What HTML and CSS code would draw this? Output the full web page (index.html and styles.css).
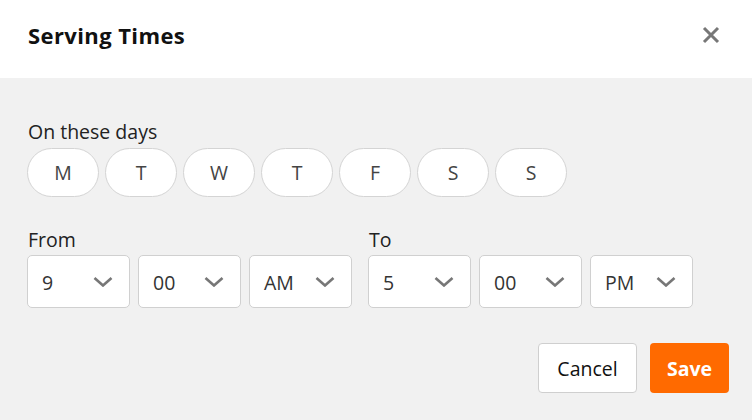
FILE: index.html
```html
<!DOCTYPE html>
<html>
<head>
<meta charset="utf-8">
<link rel="stylesheet" href="styles.css">
</head>
<body>
<div class="dialog">
  <header class="head">
    <h1 class="title">Serving Times</h1>
    <button class="close" aria-label="Close">
      <svg width="18" height="18" viewBox="0 0 18 18"><path d="M2 2 L16 16 M16 2 L2 16" stroke="#777" stroke-width="3" stroke-linecap="butt"/></svg>
    </button>
  </header>
  <main class="body">
    <div class="label">On these days</div>
    <div class="days">
      <span class="day">M</span>
      <span class="day">T</span>
      <span class="day">W</span>
      <span class="day">T</span>
      <span class="day">F</span>
      <span class="day">S</span>
      <span class="day">S</span>
    </div>
    <div class="times">
      <div class="group">
        <div class="label">From</div>
        <div class="selects">
          <div class="select"><span>9</span><svg class="chev" width="20" height="10" viewBox="0 0 20 10"><path d="M1.5 1 L10 8.5 L18.5 1" fill="none" stroke="#777" stroke-width="2.6"/></svg></div>
          <div class="select"><span>00</span><svg class="chev" width="20" height="10" viewBox="0 0 20 10"><path d="M1.5 1 L10 8.5 L18.5 1" fill="none" stroke="#777" stroke-width="2.6"/></svg></div>
          <div class="select"><span>AM</span><svg class="chev" width="20" height="10" viewBox="0 0 20 10"><path d="M1.5 1 L10 8.5 L18.5 1" fill="none" stroke="#777" stroke-width="2.6"/></svg></div>
        </div>
      </div>
      <div class="group">
        <div class="label">To</div>
        <div class="selects">
          <div class="select"><span>5</span><svg class="chev" width="20" height="10" viewBox="0 0 20 10"><path d="M1.5 1 L10 8.5 L18.5 1" fill="none" stroke="#777" stroke-width="2.6"/></svg></div>
          <div class="select"><span>00</span><svg class="chev" width="20" height="10" viewBox="0 0 20 10"><path d="M1.5 1 L10 8.5 L18.5 1" fill="none" stroke="#777" stroke-width="2.6"/></svg></div>
          <div class="select"><span>PM</span><svg class="chev" width="20" height="10" viewBox="0 0 20 10"><path d="M1.5 1 L10 8.5 L18.5 1" fill="none" stroke="#777" stroke-width="2.6"/></svg></div>
        </div>
      </div>
    </div>
    <div class="actions">
      <button class="btn cancel">Cancel</button>
      <button class="btn save">Save</button>
    </div>
  </main>
</div>
</body>
</html>
```

FILE: styles.css
```css
html, body {
  margin: 0;
  padding: 0;
  background: #f1f1f1;
  font-family: "Open Sans", "Noto Sans", sans-serif;
}
.dialog {
  width: 752px;
  height: 420px;
  display: flex;
  flex-direction: column;
}
.head {
  height: 78px;
  box-sizing: border-box;
  background: #fff;
  display: flex;
  align-items: center;
  justify-content: space-between;
  padding: 0 32px 8px 28px;
}
.title {
  margin: 0;
  font-size: 22px;
  font-weight: 700;
  color: #111;
  letter-spacing: 0.4px;
}
.close {
  border: 0;
  background: none;
  padding: 0;
  width: 18px;
  height: 18px;
  display: flex;
}
.body {
  flex: 1;
  background: #f1f1f1;
  padding: 41px 23px 0 27px;
}
.label {
  font-size: 19.5px;
  color: #222;
  line-height: 26px;
  padding-left: 1px;
}
.days {
  display: flex;
  gap: 6px;
  margin-top: 3px;
}
.day {
  width: 72px;
  height: 49px;
  box-sizing: border-box;
  border: 1px solid #d4d4d4;
  border-radius: 25px;
  background: #fff;
  display: flex;
  align-items: center;
  justify-content: center;
  font-size: 19.5px;
  color: #444;
}
.times {
  display: flex;
  gap: 16px;
  margin-top: 30px;
}
.selects {
  display: flex;
  gap: 8px;
  margin-top: 2px;
}
.select {
  width: 103px;
  height: 53px;
  box-sizing: border-box;
  border: 1px solid #d0d0d0;
  border-radius: 5px;
  background: #fff;
  display: flex;
  align-items: center;
  justify-content: space-between;
  padding: 1px 16px 0 14px;
  font-size: 19.5px;
  color: #333;
}
.actions {
  display: flex;
  justify-content: flex-end;
  gap: 13px;
  margin-top: 35px;
}
.btn {
  height: 50px;
  border-radius: 4px;
  font-family: "Open Sans", "Noto Sans", sans-serif;
  font-size: 19.5px;
  cursor: pointer;
}
.cancel {
  width: 99px;
  background: #fff;
  border: 1px solid #cfcfcf;
  color: #111;
}
.save {
  width: 79px;
  background: #ff6a00;
  border: 0;
  color: #fff;
  font-weight: 700;
}
```
